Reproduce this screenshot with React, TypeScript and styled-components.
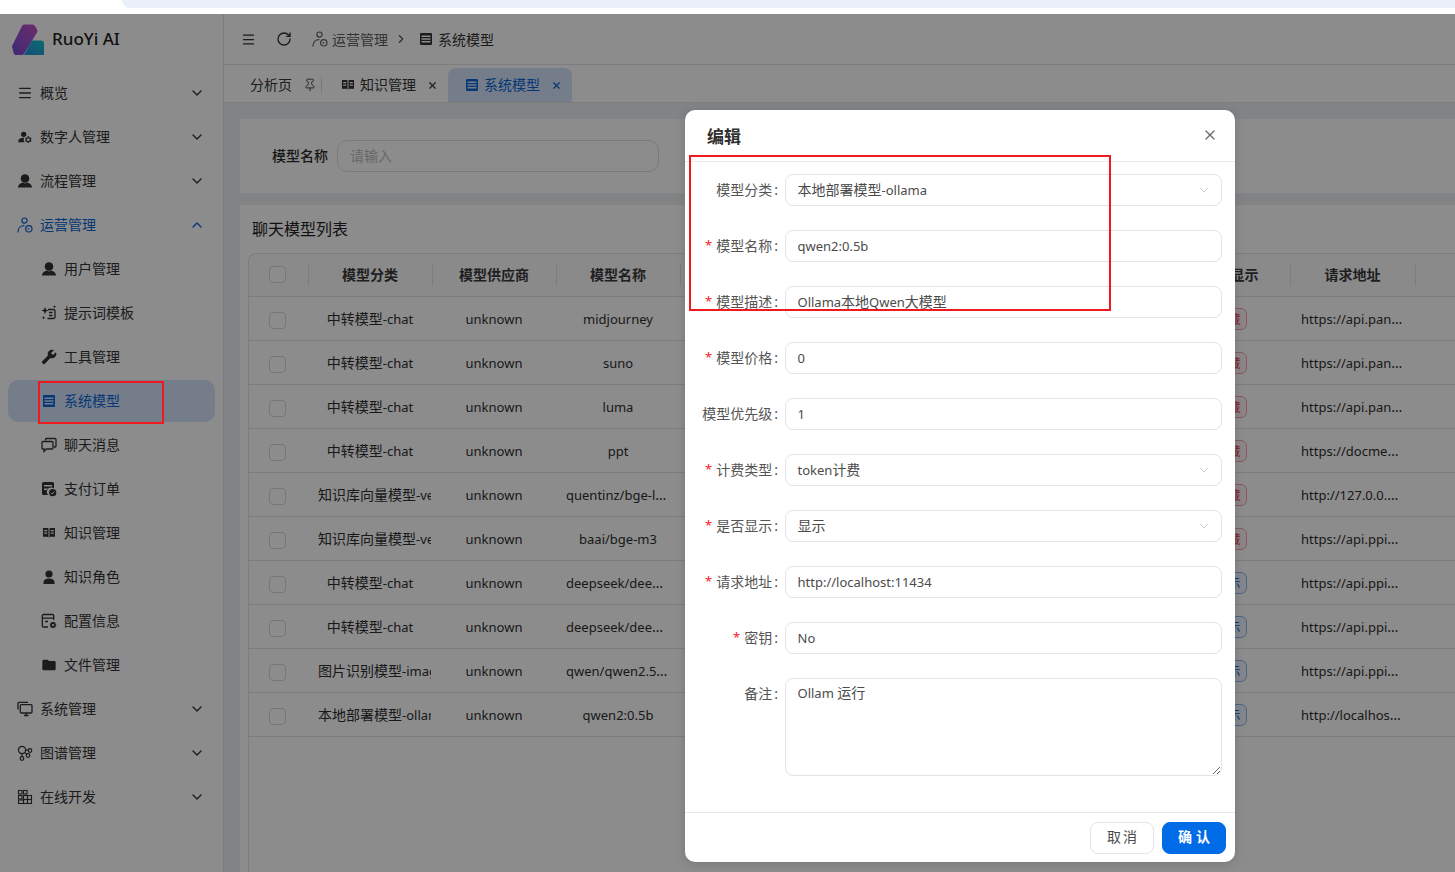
import React from "react";
import styled, { createGlobalStyle } from "styled-components";
import { Menu, ChevronDown, ChevronUp, ChevronRight, RotateCw, X, Pin } from "lucide-react";
import { MdBuild, MdFolder, MdManageAccounts } from "react-icons/md";

const Global = createGlobalStyle`
  html, body { margin: 0; height: 100%; overflow: hidden; background: #fff; }
  body, input, textarea, button {
    font-family: "Noto Sans", "Noto Sans CJK SC", sans-serif;
  }
  * { box-sizing: border-box; }
`;

const Ic = styled.svg<{ $s?: number }>`
  width: ${(p) => p.$s ?? 16}px;
  height: ${(p) => p.$s ?? 16}px;
  flex: none;
  display: block;
`;

const LatinRun = styled.span`
  font-size: 13px;
`;
const Mixed = ({ text }: { text: string }) => (
  <>
    {text.split(/([\x00-\x7f]+)/).map((part, i) =>
      i % 2 === 1 ? <LatinRun key={i}>{part}</LatinRun> : part
    )}
  </>
);

const Logo = () => (
  <Ic $s={32} viewBox="0 0 32 32">
    <defs>
      <linearGradient id="lp" x1="1" y1="0" x2="0" y2="1">
        <stop offset="0" stopColor="#c64fc4" />
        <stop offset="1" stopColor="#6f4fd8" />
      </linearGradient>
      <linearGradient id="lt" x1="0" y1="1" x2="1" y2="0">
        <stop offset="0" stopColor="#1f8fe0" />
        <stop offset="1" stopColor="#1cc0c8" />
      </linearGradient>
    </defs>
    <path d="M12 0.5h8.5q1.500 0 2.500 1.500l2 3.500q.8 1.500 0 3L12 30q-.6 1-2 1H4q-1.600 0-2.200-1.500L.3 24q-.6-1.800.4-3.300L10 2q.8-1.500 2-1.500z" fill="url(#lp)" />
    <path d="M20 16.500h9q3 0 3 3V31H12z" fill="url(#lt)" />
  </Ic>
);

const IcPerson = ({ narrow }: { narrow?: boolean }) => (
  <Ic viewBox="0 0 16 16" fill="currentColor">
    {narrow ? (
      <>
        <circle cx="8" cy="5" r="3.600" />
        <path d="M2.500 15v-1.500c0-2.600 2.500-4 5.500-4s5.500 1.400 5.500 4V15z" />
      </>
    ) : (
      <>
        <circle cx="8" cy="5.500" r="4.300" />
        <path d="M1 14.500c0-3.200 3-4.500 5-5l2 1 2-1c2 .5 5 1.800 5 5z" />
      </>
    )}
  </Ic>
);
const IcWrench = () => <MdBuild size={16} style={{ transform: "scaleX(-1)", flex: "none" }} />;
const IcAccounts = () => <MdManageAccounts size={16} style={{ flex: "none" }} />;

const IcUserClock = () => (
  <Ic viewBox="0 0 16 16" fill="none" stroke="currentColor" strokeWidth="1.200">
    <circle cx="7.500" cy="3.600" r="2.600" />
    <path d="M1 15c0-4 2.600-6.400 6-6.400" strokeLinecap="round" />
    <circle cx="11.800" cy="11.800" r="3.200" />
    <path d="M10.500 11.800h1.800" />
  </Ic>
);
const IcList = () => (
  <Ic viewBox="0 0 16 16">
    <path
      fillRule="evenodd"
      fill="currentColor"
      d="M3 2h10a1 1 0 0 1 1 1v10a1 1 0 0 1-1 1H3a1 1 0 0 1-1-1V3a1 1 0 0 1 1-1zM3.500 4.600V6h9V4.600zM3.500 7.300v1.400h9V7.300zM3.500 10v1.400h9V10z"
    />
  </Ic>
);
const IcBook = () => (
  <Ic viewBox="0 0 16 16">
    <path
      fillRule="evenodd"
      fill="currentColor"
      d="M2 3h4.800q.7 0 .7.7v8.800q-.6-.7-1.500-.7H2zM3.200 5v1.200h3V5zM3.200 7.500v1.200h3V7.500zM14 3H9.200q-.7 0-.7.700v8.800q.6-.7 1.500-.7h4zM9.800 5v1.200h3V5zM9.800 7.500v1.200h3V7.500z"
    />
  </Ic>
);
const IcPrompt = () => (
  <Ic viewBox="0 0 16 16" fill="none" stroke="currentColor" strokeWidth="1.300">
    <path d="M7 4.500h5.500A1.500 1.500 0 0 1 14 6v6a1.500 1.500 0 0 1-1.500 1.500H6.500" />
    <path d="M8 7.500h3.500M8 10.500h3.500" />
    <path fill="currentColor" stroke="none" d="M4 2l1 2.600L7.600 5.600 5 6.600 4 9.200 3 6.600.4 5.600 3 4.600zM13.500 0l.5 1.300 1.300.5-1.300.5-.5 1.300-.5-1.300-1.300-.5 1.300-.5zM2.500 11l.5 1.300 1.300.5-1.300.5-.5 1.300-.5-1.300-1.300-.5 1.300-.5z" />
  </Ic>
);
const IcChat = () => (
  <Ic viewBox="0 0 16 16" fill="none" stroke="currentColor" strokeWidth="1.300">
    <path d="M4.500 3.500V2.500A1 1 0 0 1 5.500 1.500H14a1 1 0 0 1 1 1V9a1 1 0 0 1-1 1h-1" />
    <path d="M2 4.500h9a1 1 0 0 1 1 1V11a1 1 0 0 1-1 1H5.500L3 14.500V12H2a1 1 0 0 1-1-1V5.500a1 1 0 0 1 1-1z" />
  </Ic>
);
const IcOrder = () => (
  <Ic viewBox="0 0 16 16">
    <path
      fillRule="evenodd"
      fill="currentColor"
      d="M2.500 1h9A1.500 1.500 0 0 1 13 2.500V7.500a4.300 4.300 0 0 0-5.800 6.500H2.500A1.500 1.500 0 0 1 1 12.500v-10A1.500 1.500 0 0 1 2.500 1zM3 4v1.500h8V4zM3 7.500V9h4V7.500z"
    />
    <circle cx="11.700" cy="11.700" r="3.600" fill="currentColor" />
    <path d="M10 11.800l1.200 1.200 2.200-2.400" fill="none" stroke="#fff" strokeWidth="1" />
  </Ic>
);
const IcConfig = () => (
  <Ic viewBox="0 0 16 16" fill="none" stroke="currentColor" strokeWidth="1.300">
    <path d="M7 14H2.500A1.200 1.200 0 0 1 1.300 12.800V2.700A1.200 1.200 0 0 1 2.500 1.500h9A1.200 1.200 0 0 1 12.700 2.700V7" />
    <path d="M1.300 5.200h11M4 8.500h3" />
    <circle cx="12" cy="12" r="1.900" strokeWidth="1.600" />
    <path d="M12 8.700v1.200M12 14.100v1.200M8.700 12h1.200M14.100 12h1.200M9.700 9.700l.8.800M13.500 13.500l.8.8M14.300 9.700l-.8.800M10.500 13.500l-.8.800" strokeWidth="1.100" />
  </Ic>
);
const IcMonitor = () => (
  <Ic viewBox="0 0 16 16" fill="none" stroke="currentColor" strokeWidth="1.300">
    <path d="M1 8.500V2.300A1 1 0 0 1 2 1.300h9" />
    <rect x="3.300" y="3.700" width="11.700" height="8.300" rx="1" />
    <path d="M7 14.500h4.500M9.200 12v2.500" />
  </Ic>
);
const IcGraph = () => (
  <Ic viewBox="0 0 16 16" fill="none" stroke="currentColor" strokeWidth="1.200">
    <circle cx="5" cy="5" r="3.600" />
    <circle cx="13" cy="5.500" r="1.800" />
    <circle cx="11" cy="10.500" r="1.800" />
    <circle cx="5" cy="13.500" r="1.800" />
    <path d="M8.600 5.200h2.600M7.600 7.600l2.200 1.700M5 8.600v3.100" />
  </Ic>
);
const IcGrid = () => (
  <Ic viewBox="0 0 16 16" fill="none" stroke="currentColor" strokeWidth="1.100">
    <rect x="1.500" y="1.500" width="3.500" height="3.500" />
    <rect x="6.500" y="1.500" width="3.500" height="3.500" />
    <rect x="1.500" y="6.500" width="3.500" height="3.500" />
    <rect x="6.500" y="6.500" width="4" height="4" />
    <rect x="10.500" y="6.500" width="4" height="4" />
    <rect x="1.500" y="11" width="5" height="3.500" />
    <rect x="6.500" y="10.500" width="4" height="4" />
    <rect x="10.500" y="10.500" width="4" height="4" />
  </Ic>
);

type NavItem = { label: string; icon: React.ReactNode; sub?: boolean; open?: boolean; active?: boolean; chevron?: boolean };

const nav: NavItem[] = [
  { label: "概览", icon: <Menu size={16} />, chevron: true },
  { label: "数字人管理", icon: <IcAccounts />, chevron: true },
  { label: "流程管理", icon: <IcPerson />, chevron: true },
  { label: "运营管理", icon: <IcUserClock />, chevron: true, open: true },
  { label: "用户管理", icon: <IcPerson />, sub: true },
  { label: "提示词模板", icon: <IcPrompt />, sub: true },
  { label: "工具管理", icon: <IcWrench />, sub: true },
  { label: "系统模型", icon: <IcList />, sub: true, active: true },
  { label: "聊天消息", icon: <IcChat />, sub: true },
  { label: "支付订单", icon: <IcOrder />, sub: true },
  { label: "知识管理", icon: <IcBook />, sub: true },
  { label: "知识角色", icon: <IcPerson narrow />, sub: true },
  { label: "配置信息", icon: <IcConfig />, sub: true },
  { label: "文件管理", icon: <MdFolder size={16} />, sub: true },
  { label: "系统管理", icon: <IcMonitor />, chevron: true },
  { label: "图谱管理", icon: <IcGraph />, chevron: true },
  { label: "在线开发", icon: <IcGrid />, chevron: true },
];

type RowData = { cat: string; model: string; url: string; tone: "red" | "blue" };
const rows: RowData[] = [
  { cat: "中转模型-chat", model: "midjourney", url: "https://api.pandarobot.chat", tone: "red" },
  { cat: "中转模型-chat", model: "suno", url: "https://api.pandarobot.chat", tone: "red" },
  { cat: "中转模型-chat", model: "luma", url: "https://api.pandarobot.chat", tone: "red" },
  { cat: "中转模型-chat", model: "ppt", url: "https://docmee.cn/api/docs", tone: "red" },
  { cat: "知识库向量模型-vector", model: "quentinz/bge-large-zh-v1.5", url: "http://127.0.0.1:11434", tone: "red" },
  { cat: "知识库向量模型-vector", model: "baai/bge-m3", url: "https://api.ppinfra.com", tone: "red" },
  { cat: "中转模型-chat", model: "deepseek/deepseek-r1", url: "https://api.ppinfra.com", tone: "blue" },
  { cat: "中转模型-chat", model: "deepseek/deepseek-v3", url: "https://api.ppinfra.com", tone: "blue" },
  { cat: "图片识别模型-image", model: "qwen/qwen2.5-vl-72b", url: "https://api.ppinfra.com", tone: "blue" },
  { cat: "本地部署模型-ollama", model: "qwen2:0.5b", url: "http://localhost:11434", tone: "blue" },
];

const Page = styled.div`
  width: 1455px;
  height: 872px;
  position: relative;
  overflow: hidden;
  background: #fff;
`;
const BrowserStrip = styled.div`
  height: 14px;
  background: #fff;
`;
const AddressBar = styled.div`
  margin-left: 122px;
  height: 8px;
  background: #eaeff9;
  border-radius: 0 0 0 14px;
`;
const App = styled.div`
  height: 858px;
  display: flex;
  background: #fff;
  color: #222;
  font-size: 14px;
`;
const Sidebar = styled.aside`
  width: 224px;
  flex: none;
  border-right: 1px solid #e4e4e7;
  background: #fff;
`;
const Brand = styled.div`
  height: 57px;
  display: flex;
  align-items: center;
  padding: 0 0 6px 12px;
  gap: 8px;
  font-size: 17px;
  font-weight: 500;
  color: #1f1f1f;
`;
const BrandName = styled.span`
  margin-top: -2px;
`;
const NavList = styled.ul`
  list-style: none;
  margin: 0;
  padding: 0 8px;
  display: flex;
  flex-direction: column;
  gap: 2px;
  transform: translateY(1px);
`;
const NavRow = styled.li<{ $sub?: boolean; $active?: boolean; $open?: boolean }>`
  height: 42px;
  display: flex;
  align-items: center;
  gap: 8px;
  padding-left: ${(p) => (p.$sub ? 33 : 9)}px;
  padding-right: 10px;
  border-radius: 10px;
  background: ${(p) => (p.$active ? "#d5e3fb" : "transparent")};
  color: ${(p) => (p.$active || p.$open ? "#0a66d6" : "#333")};
`;
const NavLabel = styled.span`
  flex: 1;
  margin-left: -1px;
  margin-top: -2px;
`;
const Main = styled.main`
  flex: 1;
  min-width: 0;
  display: flex;
  flex-direction: column;
  background: #eceef2;
`;
const Header = styled.header`
  height: 51px;
  flex: none;
  background: #fff;
  border-bottom: 1px solid #e4e4e7;
  display: flex;
  align-items: center;
  padding-left: 17px;
  color: #333;
`;
const IconBtn = styled.span`
  display: flex;
  margin-right: 20px;
`;
const Crumb = styled.span<{ $muted?: boolean }>`
  display: flex;
  align-items: center;
  gap: 4px;
  color: ${(p) => (p.$muted ? "#5f5f5f" : "#333")};
`;
const CrumbSep = styled.span`
  display: flex;
  margin: 0 10px 0 6px;
  color: #555;
`;
const TabBar = styled.nav`
  height: 38px;
  flex: none;
  background: #fff;
  border-bottom: 1px solid #e4e4e7;
  display: flex;
  align-items: flex-end;
  padding-left: 9px;
`;
const Tab = styled.div<{ $active?: boolean; $w: number; $pad: number }>`
  width: ${(p) => p.$w}px;
  height: 34px;
  flex: none;
  padding-left: ${(p) => p.$pad}px;
  display: flex;
  align-items: center;
  gap: 4px;
  border-radius: 8px 8px 0 0;
  position: relative;
  background: ${(p) => (p.$active ? "#d5e3fb" : "transparent")};
  color: ${(p) => (p.$active ? "#0a66d6" : "#333")};
`;
const TabText = styled.span`
  margin-top: -2px;
`;
const TabClose = styled.span<{ $gap: number }>`
  margin-left: ${(p) => p.$gap}px;
  display: flex;
`;
const TabDivider = styled.span`
  position: absolute;
  right: 0;
  top: 9px;
  height: 16px;
  width: 1px;
  background: #d9d9d9;
`;
const Content = styled.div`
  flex: 1;
  padding: 16px 0 0 16px;
  display: flex;
  flex-direction: column;
  gap: 12px;
  min-height: 0;
  width: 1300px;
`;
const SearchCard = styled.section`
  height: 74px;
  flex: none;
  background: #fff;
  display: flex;
  align-items: center;
  padding: 0 0 0 32px;
`;
const SearchLabel = styled.label`
  font-weight: 500;
  color: #2b2b2b;
  width: 65px;
  flex: none;
  padding-bottom: 2px;
`;
const SearchBox = styled.div`
  width: 322px;
  height: 32px;
  border: 1px solid #dcdfe6;
  border-radius: 10px;
  padding: 0 12px 2px;
  display: flex;
  align-items: center;
  color: #bdbdbd;
`;
const TableCard = styled.section`
  flex: 1;
  background: #fff;
  padding: 0 0 0 8px;
  min-height: 0;
`;
const TableTitle = styled.h2`
  margin: 0;
  height: 48px;
  padding: 0 0 2px 4px;
  display: flex;
  align-items: center;
  font-size: 16px;
  font-weight: 400;
  color: #222;
`;
const Table = styled.div`
  border: 1px solid #e4e4e7;
  border-bottom: 0;
  border-right: 0;
  border-radius: 8px 0 0 0;
  height: 620px;
  width: 1300px;
`;
const COLS = "60px 124px 124px 124px 122px 122px 122px 122px 122px 125px 1fr";
const HeadRow = styled.div`
  display: grid;
  grid-template-columns: ${COLS};
  height: 43px;
  align-items: center;
  border-bottom: 1px solid #e4e4e7;
  background: #fbfbfc;
  border-radius: 8px 0 0 0;
`;
const HeadCell = styled.div<{ $div?: boolean; $nudge?: number }>`
  height: 22px;
  display: flex;
  align-items: center;
  justify-content: center;
  padding: 0 1px 2px ${(p) => p.$nudge ?? 0}px;
  font-size: 14px;
  font-weight: 700;
  color: #3a3a3a;
  border-right: ${(p) => (p.$div ? "1px solid #e4e4e7" : "0")};
`;
const HeadCheck = styled.div`
  height: 22px;
  display: flex;
  justify-content: flex-start;
  padding: 2px 0 0 20px;
  border-right: 1px solid #e4e4e7;
`;
const BodyRow = styled.div`
  display: grid;
  grid-template-columns: ${COLS};
  height: 44px;
  align-items: center;
  border-bottom: 1px solid #e4e4e7;
`;
const Cell = styled.div<{ $left?: boolean }>`
  padding: 0 ${(p) => (p.$left ? 13 : 11)}px 0 ${(p) => (p.$left ? 10 : 9)}px;
  white-space: nowrap;
  overflow: hidden;
  text-overflow: ellipsis;
  text-align: ${(p) => (p.$left ? "left" : "center")};
  color: #2f2f2f;
`;
const ClipCell = styled(Cell)`
  text-overflow: clip;
  margin: -2px 2px 0 0;
  padding-right: 9px;
`;
const CheckCell = styled.div`
  display: flex;
  padding: 4px 0 0 20px;
`;
const Check = styled.span`
  width: 17px;
  height: 17px;
  border: 1px solid #d9d9d9;
  border-radius: 4px;
  display: block;
  background: #fff;
`;
const TagCell = styled.div`
  display: flex;
  justify-content: center;
  padding: 1px 3px 0 0;
`;
const Tag = styled.span<{ $tone: "red" | "blue" }>`
  height: 22px;
  width: 36px;
  border-radius: 6px;
  font-size: 12px;
  display: flex;
  align-items: center;
  justify-content: center;
  color: ${(p) => (p.$tone === "red" ? "#e5484d" : "#0a66d6")};
  border: 1px solid ${(p) => (p.$tone === "red" ? "#f2a7b4" : "#8bb9ee")};
  background: ${(p) => (p.$tone === "red" ? "#fff0f2" : "#eef5ff")};
`;

const Overlay = styled.div`
  position: absolute;
  inset: 14px 0 0 0;
  background: rgba(0, 0, 0, 0.45);
`;
const Modal = styled.div`
  position: absolute;
  left: 685px;
  top: 96px;
  width: 550px;
  height: 752px;
  background: #fff;
  border-radius: 10px;
  box-shadow: 0 2px 10px rgba(0, 0, 0, 0.15);
  display: flex;
  flex-direction: column;
  color: #4b4b4b;
  font-size: 14px;
`;
const ModalHead = styled.div`
  height: 52px;
  flex: none;
  border-bottom: 1px solid #e9e9e9;
  display: flex;
  align-items: center;
  justify-content: space-between;
  padding: 0 17px 0 22px;
  font-size: 17px;
  font-weight: 700;
  color: #303030;
`;
const CloseBtn = styled.span`
  display: flex;
  color: #666;
  margin-top: -1px;
`;
const Form = styled.form`
  flex: 1;
  padding: 12px 13px 0 0;
  display: flex;
  flex-direction: column;
  gap: 24px;
`;
const Field = styled.div`
  display: flex;
  gap: 7px;
  align-items: flex-start;
`;
const Label = styled.label`
  width: 93px;
  flex: none;
  height: 32px;
  padding-bottom: 2px;
  display: flex;
  align-items: center;
  justify-content: flex-end;
  white-space: nowrap;
  color: #555;
`;
const Colon = styled.span`
  margin-left: 2px;
`;
const Required = styled.span`
  color: #f5222d;
  margin-right: 4px;
  font-size: 13px;
`;
const Control = styled.div<{ $cjk?: boolean }>`
  flex: 1;
  min-width: 0;
  height: 32px;
  border: 1px solid #e4e4e7;
  border-radius: 8px;
  padding: 0 12px 0 11.5px;
  color: #4b4b4b;
  background: #fff;
  display: flex;
  align-items: center;
  justify-content: space-between;
  white-space: pre;
`;
const ControlValue = styled.span<{ $cjk?: boolean }>`
  margin-top: ${(p) => (p.$cjk ? -3 : -1)}px;
`;
const SelectArrow = styled.span`
  display: flex;
  color: #c8c8c8;
  margin-right: -3px;
`;
const TextArea = styled.div`
  flex: 1;
  min-width: 0;
  height: 98px;
  border: 1px solid #e4e4e7;
  border-radius: 8px;
  padding: 3px 12px 0 11.5px;
  line-height: 22px;
  color: #4b4b4b;
  background: #fff;
  resize: vertical;
  overflow: auto;
  white-space: pre-wrap;
`;
const ModalFoot = styled.div`
  height: 50px;
  flex: none;
  border-top: 1px solid #e9e9e9;
  display: flex;
  justify-content: flex-end;
  align-items: center;
  gap: 8px;
  padding: 0 9px 0 0;
`;
const Button = styled.button<{ $primary?: boolean }>`
  width: 64px;
  height: 32px;
  border-radius: 8px;
  font-size: 14px;
  letter-spacing: ${(p) => (p.$primary ? 4 : 2)}px;
  padding: 0 0 3px ${(p) => (p.$primary ? 4 : 2)}px;
  border: 1px solid ${(p) => (p.$primary ? "#006be6" : "#e4e4e7")};
  background: ${(p) => (p.$primary ? "#006be6" : "#fff")};
  color: ${(p) => (p.$primary ? "#fff" : "#4b4b4b")};
  font-weight: ${(p) => (p.$primary ? 700 : 400)};
`;
const RedBox = styled.div<{ $x: number; $y: number; $w: number; $h: number }>`
  position: absolute;
  left: ${(p) => p.$x}px;
  top: ${(p) => p.$y}px;
  width: ${(p) => p.$w}px;
  height: ${(p) => p.$h}px;
  border: 2px solid #ee1a20;
  pointer-events: none;
`;

const fields: { label: string; req?: boolean; select?: boolean; value: string }[] = [
  { label: "模型分类", select: true, value: "本地部署模型-ollama" },
  { label: "模型名称", req: true, value: "qwen2:0.5b" },
  { label: "模型描述", req: true, value: "Ollama本地Qwen大模型" },
  { label: "模型价格", req: true, value: "0" },
  { label: "模型优先级", value: "1" },
  { label: "计费类型", req: true, select: true, value: "token计费" },
  { label: "是否显示", req: true, select: true, value: "显示" },
  { label: "请求地址", req: true, value: "http://localhost:11434" },
  { label: "密钥", req: true, value: "No" },
];

export default function AppRoot() {
  return (
    <Page>
      <Global />
      <BrowserStrip>
        <AddressBar />
      </BrowserStrip>
      <App>
        <Sidebar>
          <Brand>
            <Logo />
            <BrandName>RuoYi AI</BrandName>
          </Brand>
          <NavList>
            {nav.map((n) => (
              <NavRow key={n.label} $sub={n.sub} $active={n.active} $open={n.open}>
                {n.icon}
                <NavLabel>{n.label}</NavLabel>
                {n.chevron && (n.open ? <ChevronUp size={16} /> : <ChevronDown size={16} />)}
              </NavRow>
            ))}
          </NavList>
        </Sidebar>
        <Main>
          <Header>
            <IconBtn>
              <Menu size={15} />
            </IconBtn>
            <IconBtn>
              <RotateCw size={16} />
            </IconBtn>
            <Crumb $muted>
              <IcUserClock />
              运营管理
            </Crumb>
            <CrumbSep>
              <ChevronRight size={14} />
            </CrumbSep>
            <Crumb>
              <IcList />
              系统模型
            </Crumb>
          </Header>
          <TabBar>
            <Tab $w={89} $pad={17}>
              <TabText>分析页</TabText>
              <TabClose $gap={7}>
                <Pin size={14} strokeWidth={1.500} />
              </TabClose>
              <TabDivider />
            </Tab>
            <Tab $w={126} $pad={18}>
              <IcBook />
              <TabText>知识管理</TabText>
              <TabClose $gap={7}>
                <X size={11} strokeWidth={2.500} />
              </TabClose>
            </Tab>
            <Tab $active $w={124} $pad={16}>
              <IcList />
              <TabText>系统模型</TabText>
              <TabClose $gap={7}>
                <X size={11} strokeWidth={2.500} />
              </TabClose>
            </Tab>
          </TabBar>
          <Content>
            <SearchCard>
              <SearchLabel>模型名称</SearchLabel>
              <SearchBox>请输入</SearchBox>
            </SearchCard>
            <TableCard>
              <TableTitle>聊天模型列表</TableTitle>
              <Table>
                <HeadRow>
                  <HeadCheck>
                    <Check />
                  </HeadCheck>
                  <HeadCell $div>模型分类</HeadCell>
                  <HeadCell $div>模型供应商</HeadCell>
                  <HeadCell $div>模型名称</HeadCell>
                  <HeadCell $div />
                  <HeadCell $div />
                  <HeadCell $div />
                  <HeadCell $div />
                  <HeadCell $div $nudge={3}>
                    是否显示
                  </HeadCell>
                  <HeadCell $div>请求地址</HeadCell>
                  <HeadCell />
                </HeadRow>
                {rows.map((r, i) => (
                  <BodyRow key={i}>
                    <CheckCell>
                      <Check />
                    </CheckCell>
                    <ClipCell>
                      <Mixed text={r.cat} />
                    </ClipCell>
                    <Cell>
                      <Mixed text="unknown" />
                    </Cell>
                    <Cell>
                      <Mixed text={r.model} />
                    </Cell>
                    <Cell />
                    <Cell />
                    <Cell />
                    <Cell />
                    <TagCell>
                      <Tag $tone={r.tone}>{r.tone === "red" ? "隐藏" : "显示"}</Tag>
                    </TagCell>
                    <Cell $left>
                      <Mixed text={r.url} />
                    </Cell>
                    <Cell />
                  </BodyRow>
                ))}
              </Table>
            </TableCard>
          </Content>
        </Main>
      </App>
      <Overlay>
        <Modal>
          <ModalHead>
            编辑
            <CloseBtn>
              <X size={16} strokeWidth={1.800} />
            </CloseBtn>
          </ModalHead>
          <Form>
            {fields.map((f) => (
              <Field key={f.label}>
                <Label>
                  {f.req && <Required>*</Required>}
                  {f.label}
                  <Colon>:</Colon>
                </Label>
                <Control>
                  <ControlValue $cjk={/[^\x00-\x7f]/.test(f.value)}>
                    <Mixed text={f.value} />
                  </ControlValue>
                  {f.select && (
                    <SelectArrow>
                      <ChevronDown size={16} strokeWidth={1.200} />
                    </SelectArrow>
                  )}
                </Control>
              </Field>
            ))}
            <Field>
              <Label>
                备注
                <Colon>:</Colon>
              </Label>
              <TextArea>
                <Mixed text="Ollam 运行" />
              </TextArea>
            </Field>
          </Form>
          <ModalFoot>
            <Button type="button">取消</Button>
            <Button type="button" $primary>
              确认
            </Button>
          </ModalFoot>
        </Modal>
      </Overlay>
      <RedBox $x={38} $y={381} $w={126} $h={43} />
      <RedBox $x={689} $y={155} $w={422} $h={156} />
    </Page>
  );
}
